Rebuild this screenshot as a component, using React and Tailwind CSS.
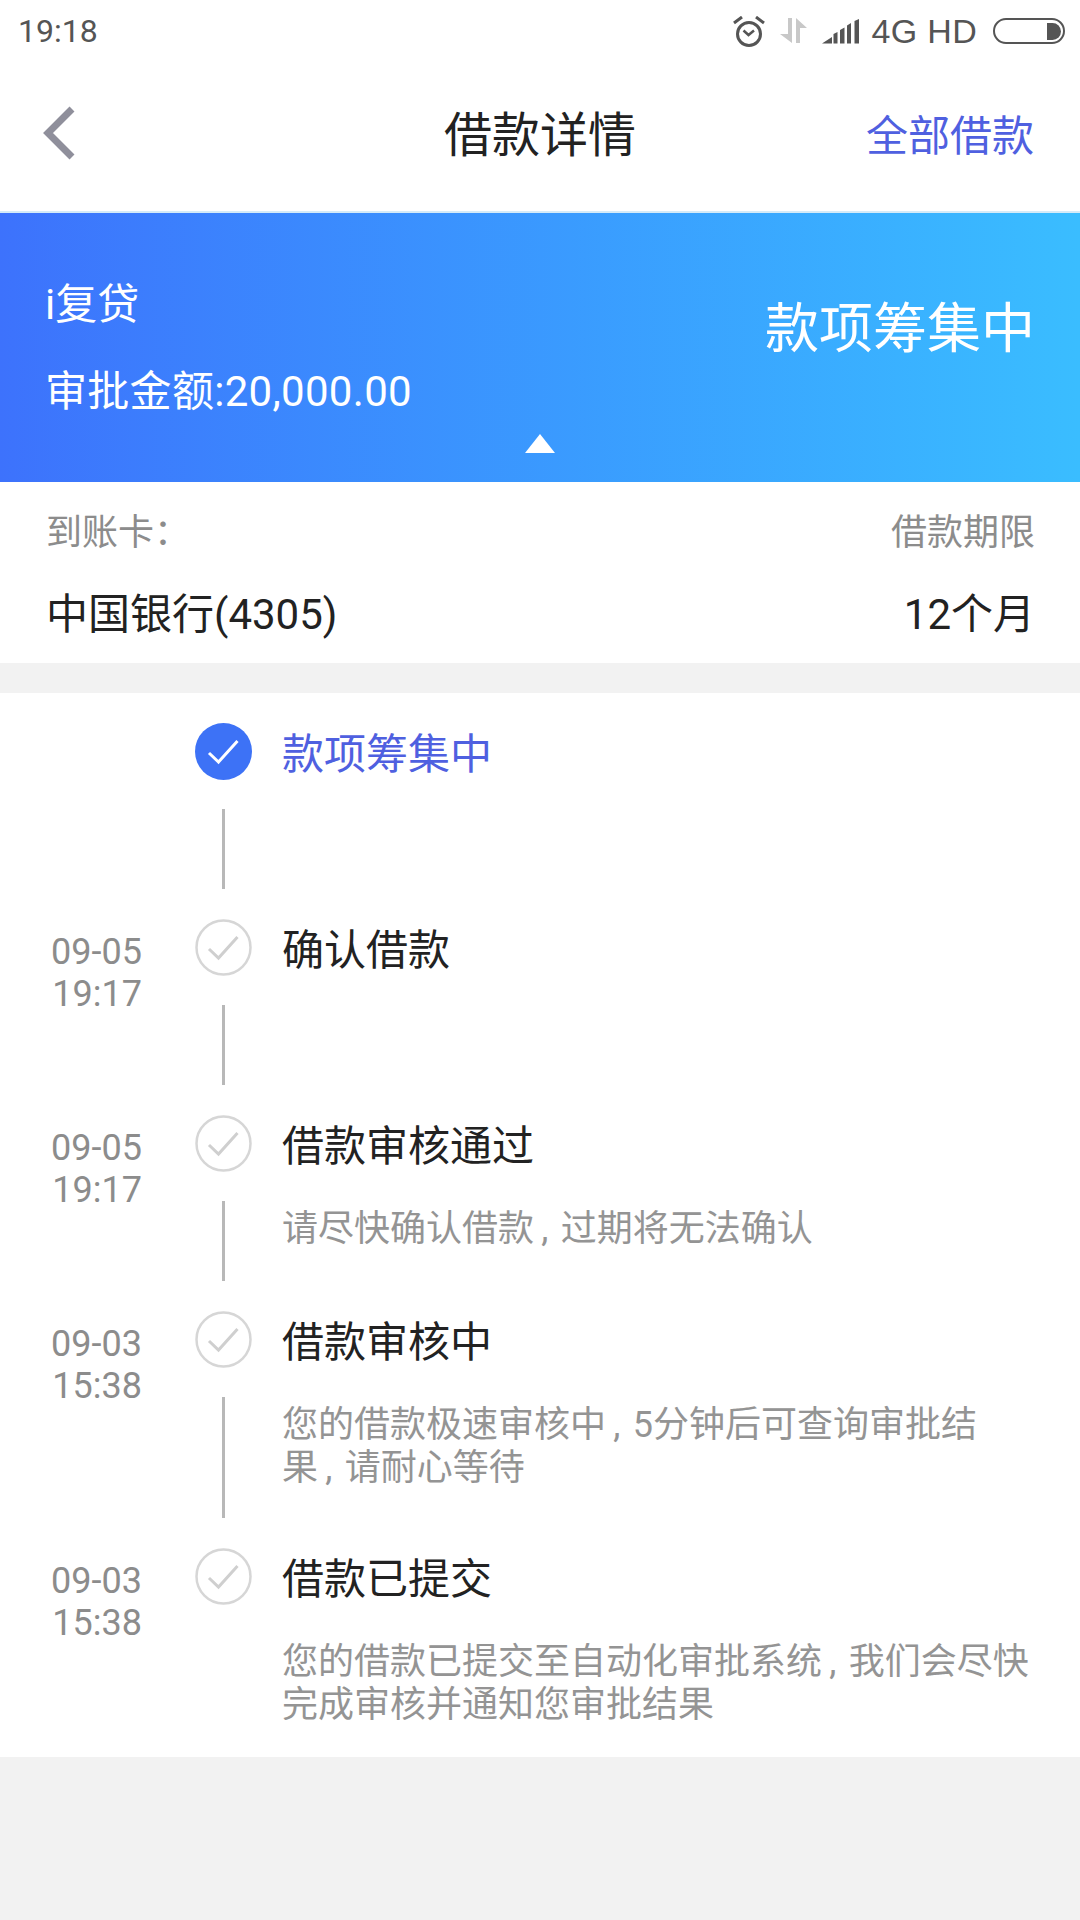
// commas in the picture are narrow, so thin spaces give them room on either side
const steps = [
  { title: "款项筹集中", active: true, lineH: "h-[80px]" },
  { title: "确认借款", date: "09-05", time: "19:17", lineH: "h-[80px]" },
  { title: "借款审核通过", date: "09-05", time: "19:17", lineH: "h-[80px]", desc: "请尽快确认借款\u2009,\u2004过期将无法确认" },
  { title: "借款审核中", date: "09-03", time: "15:38", lineH: "h-[121px]", desc: "您的借款极速审核中\u2009,\u20045分钟后可查询审批结\n果\u2009,\u2004请耐心等待" },
  { title: "借款已提交", date: "09-03", time: "15:38", desc: "您的借款已提交至自动化审批系统\u2009,\u2004我们会尽快\n完成审核并通知您审批结果" },
];

const StatusBar = () => (
  <div className="h-[60px] flex items-center justify-between pl-[18px] pr-[15px] pt-[2px] text-[32px] text-[#555555]">
    <span>19:18</span>
    <div className="flex items-center">
      {/* alarm */}
      <svg width="32" height="31" viewBox="0 0 32 31" fill="none" stroke="#555555" strokeWidth="3">
        <circle cx="16" cy="18" r="11.5" />
        <path d="M10.5 14.5l5 4.5 5.5-4.5" strokeWidth="2.5" />
        <path d="M1 7l8-6M31 7l-8-6" />
      </svg>
      {/* data arrows */}
      <svg className="ml-[15px]" width="27" height="26" viewBox="0 0 27 26" fill="#c8c8c8">
        <path d="M8 0h4v25L0 16h8z" />
        <path d="M16 0l11 10h-7v15h-4z" />
      </svg>
      {/* signal */}
      <svg className="ml-[15px]" width="37" height="25" viewBox="0 0 37 25" fill="#555555">
        <path d="M0 24.5L10 18v6.500zM11.500 15l4-2v11.500h-4zM18 11l4.500-2.500v16H18zM25 6.500L29 4v20.500h-4zM32.500 2L37 0v24.500h-4.500z" />
      </svg>
      <span className="ml-[13px] text-[34px] tracking-[0.3px] font-[family-name:'Liberation_Sans',sans-serif]">4G HD</span>
      {/* battery */}
      <div className="ml-[16px] w-[72px] h-[26px] rounded-full border-2 border-[#555555] flex justify-end items-center pr-[2px]">
        <div className="w-[14px] h-[17px] bg-[#555555] rounded-r-full" />
      </div>
    </div>
  </div>
);

const NavBar = () => (
  <div className="h-[153px] border-b-2 border-[#d5ebf8] flex items-center px-[46px]">
    <div className="flex-1 pb-[6px]">
      <svg className="-ml-[4px]" width="36" height="54" viewBox="0 0 36 54" fill="none" stroke="#8f8f9b" strokeWidth="7">
        <path d="M30 3L6 27l24 24" />
      </svg>
    </div>
    <div className="text-[48px] text-[#222222]">借款详情</div>
    <div className="flex-1 text-right text-[42px] text-[#4f60e0] pt-[1px]">全部借款</div>
  </div>
);

const Banner = () => (
  <div className="relative h-[269px] bg-gradient-to-r from-[#3d72fc] to-[#3abdff] text-white flex justify-between items-center pl-[45px] pr-[45px]">
    <div className="pt-[2px]">
      <div className="text-[42px] leading-[60px]">i复贷</div>
      <div className="text-[42px] leading-[60px] mt-[27px] tracking-[0.3px]">审批金额:20,000.00</div>
    </div>
    <div className="text-[54px] pb-[36px]">款项筹集中</div>
    <svg className="absolute left-[525px] bottom-[29px]" width="30" height="19" viewBox="0 0 30 19" fill="#ffffff">
      <path d="M15 0l15 19H0z" />
    </svg>
  </div>
);

const Info = () => (
  <div className="bg-white h-[181px] pl-[46px] pr-[45px] pt-[27px]">
    <div className="flex justify-between text-[36px] leading-[48px] text-[#8c8c8c]">
      <span>到账卡：</span>
      <span>借款期限</span>
    </div>
    <div className="flex justify-between text-[42px] leading-[60px] mt-[28px] text-[#222222]">
      <span>中国银行(4305)</span>
      <span>12个月</span>
    </div>
  </div>
);

const Step = ({ step }) => (
  <div className="flex">
    <div className="w-[142px] shrink-0 text-right text-[36px] leading-[42px] text-[#8c8c8c] pt-[12px]">
      <div>{step.date}</div>
      <div>{step.time}</div>
    </div>
    <div className="w-[57px] ml-[53px] shrink-0 flex flex-col items-center">
      {step.active ? (
        <svg width="57" height="57" viewBox="0 0 57 57" fill="none">
          <circle cx="28.5" cy="28.5" r="28.5" fill="#3d72f6" />
          <path d="M14 30l9.5 9 19-21" stroke="#ffffff" strokeWidth="3" />
        </svg>
      ) : (
        <svg width="57" height="57" viewBox="0 0 57 57" fill="none">
          <circle cx="28.5" cy="28.5" r="27" stroke="#d6d6d6" strokeWidth="2.5" />
          <path d="M14 30l9.5 9 19-21" stroke="#cfcfcf" strokeWidth="3" />
        </svg>
      )}
      {step.lineH && (
        <div className={`w-[3px] bg-[#b8b8b8] mt-[29px] mb-[30px] ${step.lineH}`} />
      )}
    </div>
    <div className="ml-[30px] flex-1">
      <div className={`text-[42px] leading-[64px] ${step.active ? "text-[#4f60e0]" : "text-[#222222]"}`}>{step.title}</div>
      {step.desc && (
        <div className="text-[36px] leading-[43px] text-[#949494] mt-[29px] whitespace-pre-line">{step.desc}</div>
      )}
    </div>
  </div>
);

export default function App() {
  return (
    <div className="w-[1080px] h-[1920px] bg-[#f2f2f2] font-[family-name:Roboto,'Noto_Sans_CJK_SC',sans-serif]">
      <div className="bg-white">
        <StatusBar />
        <NavBar />
      </div>
      <Banner />
      <Info />
      <div className="mt-[30px] bg-white h-[1064px] pt-[30px]">
        {steps.map((step) => (
          <Step key={step.title} step={step} />
        ))}
      </div>
    </div>
  );
}
